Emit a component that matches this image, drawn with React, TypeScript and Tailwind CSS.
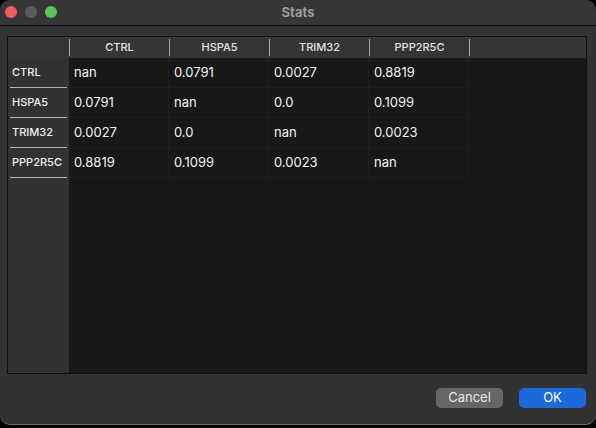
import React from 'react';

const cols = ['CTRL', 'HSPA5', 'TRIM32', 'PPP2R5C'];
const values = [
  ['nan', '0.0791', '0.0027', '0.8819'],
  ['0.0791', 'nan', '0.0', '0.1099'],
  ['0.0027', '0.0', 'nan', '0.0023'],
  ['0.8819', '0.1099', '0.0023', 'nan'],
];

export default function App() {
  return (
    <div
      className="w-[596px] h-[428px] bg-black overflow-hidden"
      style={{ fontFamily: 'Inter, "Liberation Sans", sans-serif' }}
    >
      <div className="w-[596px] h-[425px] bg-[#323232] rounded-[10px] border-b border-[#6a6a6a] flex flex-col">
        {/* Title bar */}
        <div className="relative h-[26px] shrink-0 border-b border-[#0c0c0c] bg-[#363636] rounded-t-[10px] flex items-center justify-center">
          <div className="absolute left-[5px] top-[6px] flex gap-[8px]">
            <span className="w-[12px] h-[12px] rounded-full bg-[#ec5f59]" />
            <span className="w-[12px] h-[12px] rounded-full bg-[#5b5b5b]" />
            <span className="w-[12px] h-[12px] rounded-full bg-[#5ec355]" />
          </div>
          <span className="text-[13px] font-bold text-[#9c9c9c]">Stats</span>
        </div>

        {/* Table */}
        <div className="pl-[7px] pr-[9px] pt-[10px]">
          <div className="h-[338px] border border-[#101010] flex flex-col bg-[#181818]">
            {/* Column headers */}
            <div className="h-[21px] shrink-0 flex bg-[#353535]">
              <div className="w-[61px] shrink-0" />
              {cols.map((c) => (
                <div key={c} className="w-[100px] flex items-center">
                  <span className="w-px h-[17px] bg-[#a8a8a8]" />
                  <span className="flex-1 text-center text-[11px] font-medium text-[#e4e4e4]">
                    {c}
                  </span>
                </div>
              ))}
              <span className="w-px h-[17px] self-center bg-[#a8a8a8]" />
            </div>

            <div className="flex flex-1">
              {/* Row headers */}
              <div className="w-[61px] shrink-0 bg-[#323232]">
                {cols.map((r) => (
                  <div key={r} className="h-[30px] px-[2px] flex flex-col">
                    <div className="flex-1 flex items-center pl-[2px] text-[11px] font-medium text-[#f0f0f0]">
                      {r}
                    </div>
                    <div className="h-px bg-[#b4b4b4]" />
                  </div>
                ))}
              </div>

              {/* Cells */}
              <div>
                {values.map((row, i) => (
                  <div key={i} className="flex">
                    {row.map((v, j) => (
                      <div
                        key={j}
                        className="w-[100px] h-[30px] flex items-center pl-[5px] border-r border-b border-[#1f1f1f] text-[13px] text-[#f2f2f2]"
                      >
                        {v}
                      </div>
                    ))}
                  </div>
                ))}
              </div>
            </div>
          </div>
        </div>

        {/* Buttons */}
        <div className="flex justify-end gap-[16px] pr-[10px] pt-[14px]">
          <button className="w-[67px] h-[20px] rounded-[5px] bg-[#666666] text-[13px] text-[#e6e6e6]">
            Cancel
          </button>
          <button className="w-[67px] h-[20px] rounded-[5px] bg-[#1c69dc] text-[13px] text-white">
            OK
          </button>
        </div>
      </div>
    </div>
  );
}
